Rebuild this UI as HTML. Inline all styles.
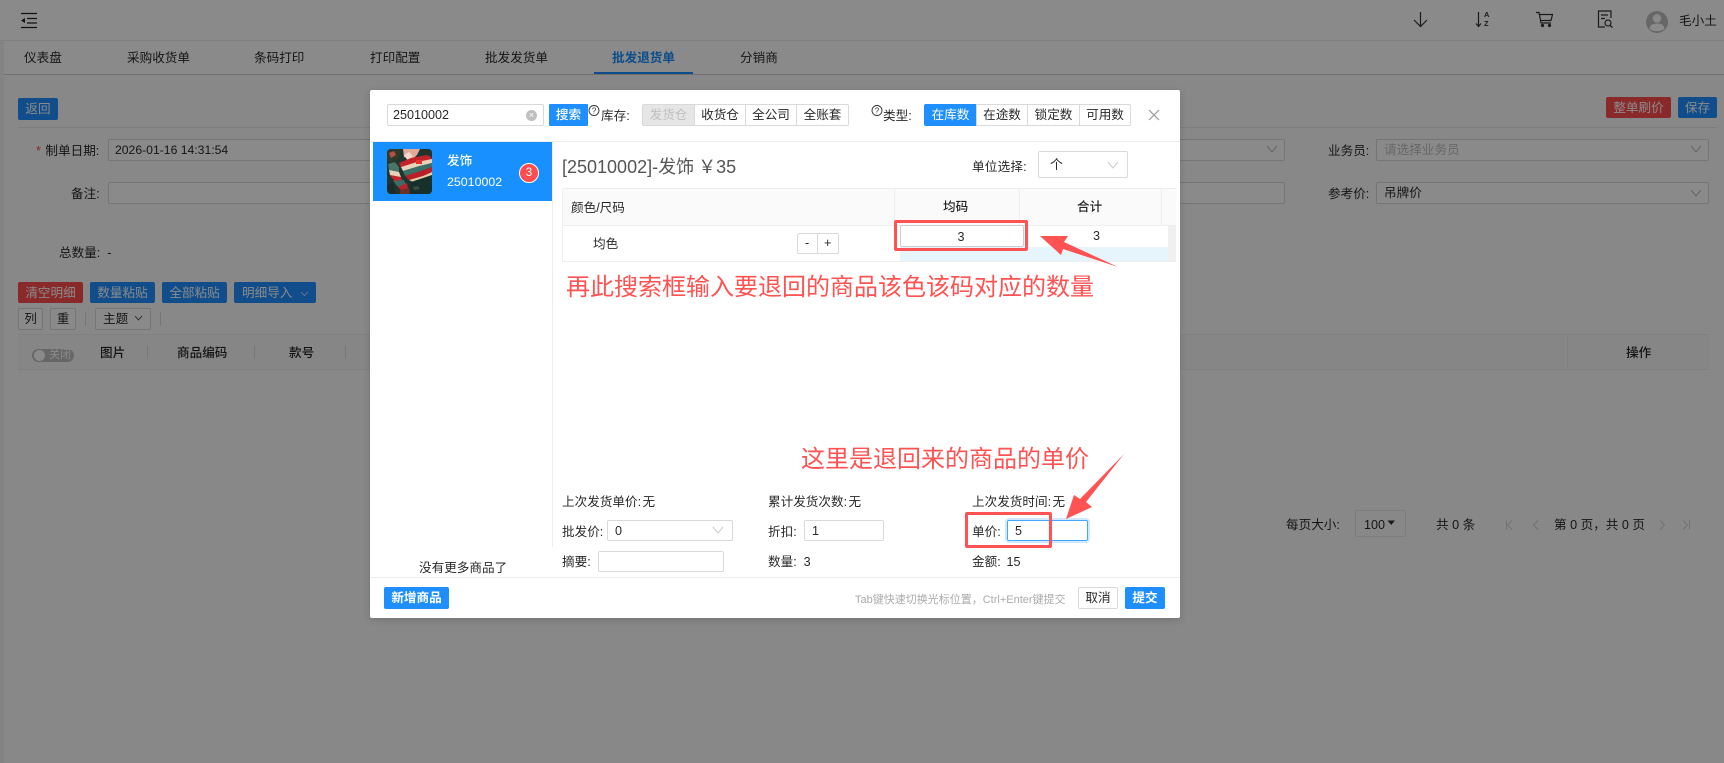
<!DOCTYPE html>
<html><head><meta charset="utf-8"><title>批发退货单</title>
<style>
html,body{margin:0;padding:0;width:1724px;height:763px;overflow:hidden;background:#fff}
body{position:relative;font-family:"Liberation Sans","Noto Sans CJK SC",sans-serif;font-size:12.6px;color:rgba(0,0,0,.85)}
.t{position:absolute;white-space:nowrap;line-height:20px;height:20px}
.s{word-spacing:-2px}
.b{position:absolute;box-sizing:border-box;text-align:center;white-space:nowrap;border-radius:2px}
.p{background:#1f8fff;color:#fff}
.d{background:#ff4d4f;color:#fff}
.o{background:#fff;border:1px solid #d9d9d9}
.i{position:absolute;box-sizing:border-box;background:#fff;border:1px solid #d9d9d9;border-radius:2px;line-height:20px;padding-left:7px;white-space:nowrap}
.l{position:absolute;background:#e8e8e8}
svg{position:absolute;overflow:visible}
#ov{position:absolute;left:0;top:0;width:1724px;height:763px;background:rgba(0,0,0,.46)}
#m{position:absolute;left:370px;top:90px;width:810px;height:528px;background:#fff;border-radius:2px;box-shadow:0 2px 8px rgba(0,0,0,.15)}
.m{position:absolute;left:0;top:0;width:1724px;height:763px}
.ch{fill:none;stroke:#bbb;stroke-width:1}
.r{position:absolute;box-sizing:border-box;border:3px solid #ff5252;border-radius:2px}
.ann{position:absolute;color:#ff5252;font-size:24px;line-height:30px;white-space:nowrap}
.h{font-weight:500}
</style></head><body>

<!-- background page -->
<div style="position:absolute;left:0;top:41px;width:1724px;height:33px;background:#fff"></div>
<div style="position:absolute;left:0;top:75px;width:1724px;height:688px;background:#fcfcfc"></div>
<div class="l" style="left:0;top:40px;width:1724px;height:1px;background:#ededed"></div>
<div class="l" style="left:0;top:74px;width:1724px;height:1px;background:#cfcfcf"></div>
<div style="position:absolute;left:0;top:41px;width:4px;height:722px;background:#f3f3f3"></div>

<svg style="left:0;top:0" width="60" height="40"><path d="M21 13.5H37M27 18.5H37M27 23H37M21 27.5H37" stroke="#222" stroke-width="1.3" fill="none"/><path d="M25 18L21 20.5L25 23Z" fill="#222"/></svg>

<div class="t" style="left:24px;top:48px">仪表盘</div>
<div class="t" style="left:127px;top:48px">采购收货单</div>
<div class="t" style="left:254px;top:48px">条码打印</div>
<div class="t" style="left:370px;top:48px">打印配置</div>
<div class="t" style="left:485px;top:48px">批发发货单</div>
<div class="t" style="left:612px;top:48px;color:#1890ff;font-weight:700">批发退货单</div>
<div class="t" style="left:740px;top:48px">分销商</div>
<div class="l" style="left:594px;top:72px;width:99px;height:2px;background:#1890ff"></div>

<!-- header right icons -->
<svg style="left:1400px;top:5px" width="320" height="36" viewBox="1400 5 320 36">
<path d="M1420.500 12V26M1414 20L1420.500 26.500L1427 20" fill="none" stroke="#333" stroke-width="1.2"/>
<path d="M1478.500 12V26M1476 23.500L1478.500 26.500L1481 23.500" fill="none" stroke="#333" stroke-width="1.2"/>
<text x="1484" y="17" font-size="7.500" font-weight="700" fill="#333" font-family="Liberation Sans">A</text>
<text x="1484" y="26" font-size="7.500" font-weight="700" fill="#333" font-family="Liberation Sans">Z</text>
<path d="M1536 12.500H1539L1541 23H1551M1539.500 14.500H1552.500L1551 20.500H1540.500" fill="none" stroke="#333" stroke-width="1.2"/>
<circle cx="1542.500" cy="25.500" r="1.6" fill="#333"/><circle cx="1549.500" cy="25.500" r="1.6" fill="#333"/>
<path d="M1611 18V11H1598.500V27H1605M1601 15H1608M1601 18.500H1605" fill="none" stroke="#333" stroke-width="1.2"/>
<circle cx="1608" cy="23" r="3" fill="none" stroke="#333" stroke-width="1.2"/><path d="M1610 25.500L1612.500 27.500" stroke="#333" stroke-width="1.2"/>
<circle cx="1657" cy="22" r="11" fill="#bfbfbf"/>
<circle cx="1657" cy="18.500" r="4.200" fill="#fff"/><path d="M1649.500 29C1650 24.500 1653 23.500 1657 23.500S1664 24.500 1664.500 29C1660 32 1654 32 1649.500 29Z" fill="#fff"/>
</svg>
<div class="t" style="left:1679px;top:11px">毛小土</div>

<!-- page top actions -->
<div class="b p" style="left:18px;top:98px;width:40px;height:22px;line-height:23px">返回</div>
<div class="b d" style="left:1606px;top:97px;width:65px;height:21px;line-height:22px">整单刷价</div>
<div class="b p" style="left:1678px;top:97px;width:39px;height:21px;line-height:22px">保存</div>
<div class="l" style="left:18px;top:127px;width:1699px;height:1px"></div>

<!-- form -->
<div class="t" style="left:36px;top:141px"><span style="color:#ff4d4f">*</span> <span style="margin-left:1px">制单日期:</span></div>
<div class="i" style="left:108px;top:139px;width:1177px;height:22px;font-size:12.200px;padding-left:6px">2026-01-16 14:31:54</div>
<svg style="left:0;top:0" width="1724" height="220"><path class="ch" d="M1267 146L1272 152L1277 146"/></svg>
<div class="t" style="left:1328px;top:141px">业务员:</div>
<div class="i" style="left:1376px;top:139px;width:333px;height:22px;color:#bfbfbf;line-height:21px">请选择业务员</div>
<svg style="left:0;top:0" width="1724" height="220"><path class="ch" d="M1691 146L1696 152L1701 146"/></svg>
<div class="t" style="left:71px;top:184px">备注:</div>
<div class="i" style="left:108px;top:182px;width:1177px;height:22px"></div>
<div class="t" style="left:1328px;top:184px">参考价:</div>
<div class="i" style="left:1376px;top:182px;width:333px;height:22px;line-height:21px">吊牌价</div>
<svg style="left:0;top:0" width="1724" height="220"><path class="ch" d="M1691 190L1696 196L1701 190"/></svg>
<div class="t" style="left:59px;top:243px">总数量: &nbsp;-</div>

<!-- detail toolbar -->
<div class="b d" style="left:18px;top:282px;width:65px;height:21px;line-height:22px">清空明细</div>
<div class="b p" style="left:90px;top:282px;width:65px;height:21px;line-height:22px">数量粘贴</div>
<div class="b p" style="left:162px;top:282px;width:65px;height:21px;line-height:22px">全部粘贴</div>
<div class="b p" style="left:234px;top:282px;width:82px;height:21px;line-height:22px;text-align:left;padding-left:8px">明细导入</div>
<div class="b o" style="left:18px;top:308px;width:25px;height:22px;line-height:20px">列</div>
<div class="b o" style="left:50px;top:308px;width:26px;height:22px;line-height:20px">重</div>
<div class="l" style="left:85px;top:312px;width:1px;height:14px;background:#ddd"></div>
<div class="b o" style="left:95px;top:308px;width:56px;height:22px;line-height:21px;text-align:left;padding-left:7px">主题</div>
<div class="l" style="left:160px;top:312px;width:1px;height:14px;background:#ddd"></div>
<svg style="left:0;top:0" width="400" height="340"><path d="M301 292L304.500 295.500L308 292" fill="none" stroke="#d8e8f8" stroke-width=".8"/><path d="M135 316L138.500 320L142 316" fill="none" stroke="#444" stroke-width=".9"/></svg>

<!-- table head -->
<div style="position:absolute;left:18px;top:334px;width:1691px;height:36px;background:#f8f8f8;border-top:1px solid #eee;border-bottom:1px solid #eee;box-sizing:border-box"></div>
<div style="position:absolute;left:32px;top:349px;width:42px;height:13px;border-radius:7px;background:#bfbfbf;color:#fff;font-size:11px;line-height:13px;text-indent:17px;white-space:nowrap">关闭</div>
<div style="position:absolute;left:34px;top:350px;width:11px;height:11px;border-radius:50%;background:#fff"></div>
<div class="t h" style="left:100px;top:343px">图片</div>
<div class="t h" style="left:177px;top:343px">商品编码</div>
<div class="t h" style="left:289px;top:343px">款号</div>
<div class="t h" style="left:1626px;top:343px">操作</div>
<div class="l" style="left:147px;top:346px;width:1px;height:13px;background:#ddd"></div>
<div class="l" style="left:254px;top:346px;width:1px;height:13px;background:#ddd"></div>
<div class="l" style="left:345px;top:346px;width:1px;height:13px;background:#ddd"></div>
<div class="l" style="left:1567px;top:336px;width:1px;height:32px;background:#eee"></div>

<!-- pagination -->
<div class="t" style="left:1286px;top:515px">每页大小:</div>
<div class="b" style="left:1355px;top:510px;width:51px;height:27px;border:1px solid #e8e8e8"></div>
<div class="t" style="left:1364px;top:515px">100</div>
<svg style="left:0;top:0" width="1724" height="560"><path d="M1387.500 520.500H1395L1391.200 525Z" fill="#333"/><path d="M1506.500 520.500V529.500M1512 520.500L1507.500 525L1512 529.500M1538 520.500L1533.500 525L1538 529.500M1660 520.500L1664.500 525L1660 529.500M1683 520.500L1687.500 525L1683 529.500M1689.500 520.500V529.500" fill="none" stroke="#ccc" stroke-width=".9"/></svg>
<div class="t" style="left:1436px;top:515px">共 0 条</div>
<div class="t" style="left:1554px;top:515px">第 0 页，共 0 页</div>

<div id="ov"></div>

<!-- modal -->
<div id="m"></div>
<div class="m">
<div class="i" style="left:387px;top:104px;width:157px;height:22px;padding-left:5px;line-height:20px">25010002</div>
<div style="position:absolute;left:526px;top:110px;width:11px;height:11px;border-radius:50%;background:#bfbfbf;color:#fff;font-size:9px;line-height:10px;text-align:center">×</div>
<div class="b p" style="left:549px;top:104px;width:39px;height:22px;line-height:23px;border-radius:1px;font-weight:500">搜索</div>
<svg style="left:0;top:0" width="1000" height="130"><circle cx="594" cy="110.500" r="5" fill="none" stroke="#333" stroke-width=".9"/><circle cx="877" cy="110.500" r="5" fill="none" stroke="#333" stroke-width=".9"/><text x="594" y="113.500" font-size="8" text-anchor="middle" fill="#333" font-family="Liberation Sans">?</text><text x="877" y="113.500" font-size="8" text-anchor="middle" fill="#333" font-family="Liberation Sans">?</text></svg>
<div class="t" style="left:601px;top:106px">库存:</div>
<div class="b" style="left:642px;top:104px;width:53px;height:22px;line-height:21px;background:#e6e6e6;border:1px solid #d9d9d9;color:#bfbfbf;border-radius:2px 0 0 2px">发货仓</div>
<div class="b o" style="left:694px;top:104px;width:52px;height:22px;line-height:21px;border-radius:0">收货仓</div>
<div class="b o" style="left:745px;top:104px;width:52px;height:22px;line-height:21px;border-radius:0">全公司</div>
<div class="b o" style="left:796px;top:104px;width:53px;height:22px;line-height:21px;border-radius:0 2px 2px 0">全账套</div>
<div class="t" style="left:883px;top:106px">类型:</div>
<div class="b p" style="left:924px;top:104px;width:53px;height:22px;line-height:23px;border-radius:2px 0 0 2px">在库数</div>
<div class="b o" style="left:976px;top:104px;width:52px;height:22px;line-height:21px;border-radius:0">在途数</div>
<div class="b o" style="left:1027px;top:104px;width:53px;height:22px;line-height:21px;border-radius:0">锁定数</div>
<div class="b o" style="left:1079px;top:104px;width:52px;height:22px;line-height:21px;border-radius:0 2px 2px 0">可用数</div>
<svg style="left:0;top:0" width="1180" height="130"><path d="M1149 110L1159 120M1159 110L1149 120" stroke="#999" stroke-width="1.2" fill="none"/></svg>
<div class="l" style="left:370px;top:141px;width:810px;height:1px;background:#eee"></div>

<!-- product list -->
<div style="position:absolute;left:373px;top:142px;width:179px;height:59px;background:#1890ff"></div>
<svg style="left:387px;top:149px" width="45" height="45" viewBox="0 0 45 45">
<defs><clipPath id="c"><rect width="45" height="45" rx="4"/></clipPath></defs>
<g clip-path="url(#c)">
<rect width="45" height="45" fill="#1f3530"/>
<path d="M0 0H14L11 9L5 14L0 12Z" fill="#2e3a2a"/>
<path d="M2 4L7 2L9 6L4 9Z" fill="#b5523f"/>
<path d="M16 0H33L30 6L25 11L17 8Z" fill="#dfa898"/>
<path d="M17 6L22 3L26 7L21 12Z" fill="#f2d8cf"/>
<path d="M33 0H45V6L36 5Z" fill="#23322b"/>
<path d="M12 14L24 9L40 6L44 8L45 12L30 14L14 19Z" fill="#c2232b"/>
<path d="M14 18L30 13L45 10V14L30 18L16 22Z" fill="#e9d3b8"/>
<path d="M16 22L32 17L45 14V18L32 23L18 27Z" fill="#3d6f69"/>
<path d="M18 27L34 22L45 18V23L34 28L22 31Z" fill="#ba1f27"/>
<path d="M22 31L36 27L45 23V26L36 31L26 33Z" fill="#e8c9a8"/>
<rect x="29" y="11" width="6" height="4" fill="#e8302c"/>
<path d="M1 15L8 13L12 18L12 24L6 23L2 21Z" fill="#4b7468"/>
<path d="M2 21L12 23L14 28L8 29L3 26Z" fill="#e6d2b7"/>
<path d="M3 26L14 28L16 33L9 34Z" fill="#c4262c"/>
<path d="M6 32L17 31L19 36L11 38Z" fill="#3e6d65"/>
<path d="M11 38L20 34L21 40L16 43Z" fill="#b9242a"/>
<path d="M24 33L45 26V45H22Z" fill="#17302c"/>
<path d="M26 38L31 37L33 40L27 41Z" fill="#3b4d3c"/>
<path d="M13 41L22 39L23 45H13Z" fill="#6d3029"/>
<path d="M0 36L6 33L9 45H0Z" fill="#1c2d28"/>
</g></svg>
<div class="t" style="left:447px;top:151px;color:#fff;font-weight:500">发饰</div>
<div class="t" style="left:447px;top:172px;color:#fff;font-size:12.400px">25010002</div>
<div style="position:absolute;left:519px;top:163px;width:20px;height:20px;box-sizing:border-box;border:1px solid #fff;border-radius:50%;background:#ff4d4f;color:#fff;font-size:11.500px;line-height:18px;text-align:center">3</div>
<div class="t" style="left:419px;top:558px">没有更多商品了</div>
<div class="l" style="left:552px;top:142px;width:1px;height:405px;background:#eee"></div>

<!-- detail -->
<div class="t" style="left:562px;top:157px;font-size:18px;color:#555;word-spacing:-1px">[25010002]-发饰 ￥35</div>
<div class="t" style="left:972px;top:157px;letter-spacing:.2px">单位选择:</div>
<div class="i" style="left:1038px;top:151px;width:90px;height:27px;line-height:26px;padding-left:11px;font-size:13px">个</div>
<svg style="left:0;top:0" width="1180" height="180"><path d="M1108 162L1113 168L1118 162" fill="none" stroke="#ccc"/></svg>

<div style="position:absolute;left:562px;top:188px;width:614px;height:37px;background:#fafafa;box-sizing:border-box;border-top:1px solid #eee;border-left:1px solid #eee"></div>
<div class="l" style="left:562px;top:225px;width:614px;height:1px;background:#eee"></div>
<div class="l" style="left:562px;top:188px;width:1px;height:74px;background:#eee"></div>
<div class="l" style="left:562px;top:261px;width:614px;height:1px;background:#eee"></div>
<div class="l" style="left:894px;top:188px;width:1px;height:37px;background:#eee"></div>
<div class="l" style="left:1019px;top:188px;width:1px;height:37px;background:#eee"></div>
<div class="l" style="left:1161px;top:188px;width:1px;height:37px;background:#eee"></div>
<div class="t" style="left:571px;top:198px">颜色/尺码</div>
<div class="t h" style="left:943px;top:197px">均码</div>
<div class="t h" style="left:1077px;top:197px">合计</div>
<div class="t" style="left:593px;top:234px">均色</div>
<div class="b o" style="left:797px;top:233px;width:42px;height:21px;line-height:19px;text-align:left;padding-left:7px">-</div>
<div class="l" style="left:817px;top:233px;width:1px;height:21px;background:#d9d9d9"></div>
<div class="t" style="left:824px;top:233px">+</div>
<div style="position:absolute;left:900px;top:247px;width:268px;height:14px;background:#e6f4fc"></div>
<div style="position:absolute;left:1168px;top:226px;width:8px;height:35px;background:#f0f0f0"></div>
<div class="i" style="left:900px;top:225px;width:124px;height:22px;text-align:center;padding:0 2px 0 0;line-height:22px;border-color:#ccc">3</div>
<div class="t" style="left:1093px;top:226px">3</div>

<div class="t s" style="left:562px;top:492px">上次发货单价: 无</div>
<div class="t s" style="left:768px;top:492px">累计发货次数: 无</div>
<div class="t s" style="left:972px;top:492px">上次发货时间: 无</div>
<div class="t" style="left:562px;top:522px">批发价:</div>
<div class="i" style="left:607px;top:520px;width:126px;height:21px;line-height:21px">0</div>
<svg style="left:0;top:0" width="760" height="540"><path d="M713 527L718 533L723 527" fill="none" stroke="#ccc"/></svg>
<div class="t" style="left:768px;top:522px">折扣:</div>
<div class="i" style="left:804px;top:520px;width:80px;height:21px;line-height:21px">1</div>
<div class="t" style="left:972px;top:522px">单价:</div>
<div class="i" style="left:1007px;top:520px;width:81px;height:21px;line-height:21px;border-color:#40a9ff;box-shadow:0 0 0 2px rgba(24,144,255,.2)">5</div>
<div class="t" style="left:562px;top:552px">摘要:</div>
<div class="i" style="left:598px;top:551px;width:126px;height:21px"></div>
<div class="t" style="left:768px;top:552px">数量: &nbsp;3</div>
<div class="t" style="left:972px;top:552px;word-spacing:-.6px">金额: &nbsp;15</div>

<!-- footer -->
<div class="l" style="left:370px;top:577px;width:810px;height:1px;background:#eee"></div>
<div class="b p" style="left:384px;top:587px;width:65px;height:22px;line-height:23px;font-weight:700">新增商品</div>
<div class="t" style="left:855px;top:590px;font-size:11px;color:#aaa">Tab键快速切换光标位置，Ctrl+Enter键提交</div>
<div class="b o" style="left:1078px;top:587px;width:40px;height:22px;line-height:21px">取消</div>
<div class="b p" style="left:1125px;top:587px;width:40px;height:22px;line-height:23px;font-weight:700">提交</div>

<!-- annotations -->
<div class="r" style="left:894px;top:220px;width:134px;height:31px"></div>
<div class="r" style="left:965px;top:512px;width:87px;height:36px"></div>
<svg style="left:0;top:0" width="1200" height="560">
<path d="M1040 236L1068 236L1064 242L1118 267L1063 249L1061 255Z" fill="#ff5252"/>
<path d="M1124 454L1086 502L1092 507L1066 519L1074 495L1080 499Z" fill="#ff5252"/>
</svg>
<div class="ann" style="left:566px;top:273px">再此搜索框输入要退回的商品该色该码对应的数量</div>
<div class="ann" style="left:801px;top:445px">这里是退回来的商品的单价</div>
</div>
</body></html>
